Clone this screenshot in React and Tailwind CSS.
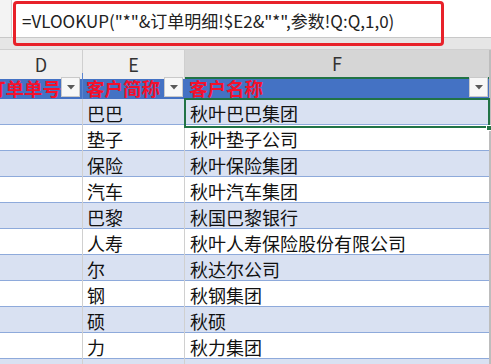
import React from "react";

const rows = [
  ["巴巴", "秋叶巴巴集团"],
  ["垫子", "秋叶垫子公司"],
  ["保险", "秋叶保险集团"],
  ["汽车", "秋叶汽车集团"],
  ["巴黎", "秋国巴黎银行"],
  ["人寿", "秋叶人寿保险股份有限公司"],
  ["尔", "秋达尔公司"],
  ["钢", "秋钢集团"],
  ["硕", "秋硕"],
  ["力", "秋力集团"],
];

function FilterButton() {
  return (
    <div className="w-[19px] h-[20px] mt-[2px] bg-[#f7f7f7] border border-[#c9c9c9] flex items-center justify-center shrink-0">
      <svg width="8" height="5" viewBox="0 0 8 5">
        <path d="M0 0 L8 0 L4 4.5 Z" fill="#595959" />
      </svg>
    </div>
  );
}

export default function App() {
  return (
    <div
      className="relative w-[491px] h-[364px] overflow-hidden bg-white"
      style={{ fontFamily: '"Noto Sans CJK SC", "Noto Sans", sans-serif' }}
    >
      {/* Formula bar */}
      <div className="flex h-[38px] border-b border-[#c8c8c8]">
        <div className="w-[12px] bg-[#f3f3f3] border-r border-[#d4d4d4]" />
        <div className="flex-1 flex items-center pl-[10px] pt-[5px] text-[17px] text-[#222] whitespace-nowrap">
          =VLOOKUP("*"&amp;订单明细!$E2&amp;"*",参数!Q:Q,1,0)
        </div>
      </div>
      <div className="h-[12px] bg-[#e6e6e6] border-b border-[#d0d0d0]" />

      {/* Column letters */}
      <div className="grid grid-cols-[83px_102px_304px_2px] h-[23px] text-[18px] text-[#333]">
        <div className="bg-[#efefef] border-r border-[#cfcfcf] flex items-center justify-center">D</div>
        <div className="bg-[#efefef] border-r border-[#cfcfcf] flex items-center justify-center">E</div>
        <div className="bg-[#d6d6d6] border-b-2 border-[#217346] flex items-center justify-center">F</div>
        <div className="bg-[#bdbdbd]" />
      </div>

      {/* Table header */}
      <div className="grid grid-cols-[83px_102px_304px_2px] h-[26px] bg-[#4472c4] text-[18.5px] font-bold text-[#f5102c]">
        <div className="flex items-center overflow-hidden pr-[2px] border-r border-[#5b84cf]">
          <span className="ml-[-13px] flex-1 whitespace-nowrap leading-[20px] mt-[3px]">订单单号</span>
          <FilterButton />
        </div>
        <div className="flex items-center overflow-hidden pl-[3px] pr-[2px]">
          <span className="flex-1 whitespace-nowrap leading-[20px] mt-[3px]">客户简称</span>
          <FilterButton />
        </div>
        <div className="flex items-center overflow-hidden pl-[4px] pr-[1px]">
          <span className="flex-1 whitespace-nowrap leading-[20px] mt-[3px]">客户名称</span>
          <FilterButton />
        </div>
        <div className="bg-[#bdbdbd]" />
      </div>

      {/* Data rows */}
      {rows.map(([short, full], i) => (
        <div
          key={short}
          className={`grid grid-cols-[83px_102px_304px_2px] h-[26px] border-b border-[#8eaadb] text-[18px] text-[#111] ${
            i % 2 === 0 ? "bg-[#d9e1f2]" : "bg-white"
          }`}
        >
          <div className="border-r border-[#d0d0d0]" />
          <div className="border-r border-[#d0d0d0] flex items-center pl-[4px] pt-[1px] whitespace-nowrap">{short}</div>
          <div className="relative flex items-center pl-[5px] pt-[1px] whitespace-nowrap">
            {full}
            {i === 0 && (
              <>
                <div className="absolute inset-[-1px] border-2 border-[#217346]" />
                <div className="absolute right-[-3px] bottom-[-4px] w-[6px] h-[6px] bg-[#217346] border border-white" />
              </>
            )}
          </div>
          <div className="bg-[#bdbdbd]" />
        </div>
      ))}
      <div className="grid grid-cols-[83px_102px_304px_2px] h-[10px] bg-[#d9e1f2]">
        <div className="border-r border-[#d0d0d0]" />
        <div className="border-r border-[#d0d0d0]" />
        <div />
        <div className="bg-[#bdbdbd]" />
      </div>

      {/* Red annotation box */}
      <div className="absolute left-[13px] top-[1px] w-[431px] h-[45px] border-[3px] border-[#e8222a] rounded-[4px]" />
    </div>
  );
}
